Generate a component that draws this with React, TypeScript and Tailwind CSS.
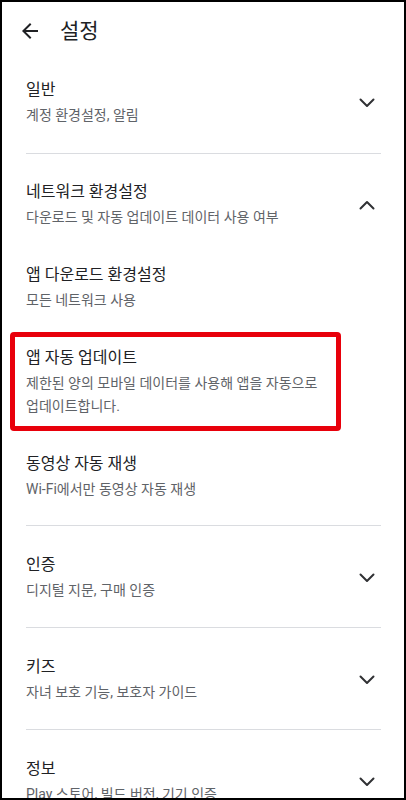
import React from "react";

const Chevron = ({ up = false }: { up?: boolean }) => (
  <svg width="16" height="10" viewBox="0 0 16 10" className="shrink-0" fill="none">
    <polyline
      points={up ? "1.5,8.5 8,2 14.5,8.5" : "1.5,1.5 8,8 14.5,1.5"}
      stroke="#303134"
      strokeWidth="2"
      strokeLinecap="round"
      strokeLinejoin="round"
    />
  </svg>
);

const Title = ({ children }: { children: React.ReactNode }) => (
  <div className="text-[16px] leading-[22px] text-[#202124]">{children}</div>
);
const Sub = ({ children }: { children: React.ReactNode }) => (
  <div className="mt-[3px] text-[14px] leading-[23px] text-[#5f6368]">{children}</div>
);

const Divider = () => <div className="ml-[24px] mr-[23px] h-px bg-[#dadce0]" />;

const Section = ({
  title,
  sub,
  first = false,
}: {
  title: string;
  sub: string;
  first?: boolean;
}) => (
  <div>
    <div
      className={`flex items-center justify-between pl-[24px] pr-[29px] ${first ? "pt-[19px] pb-[26px]" : "pt-[28px] pb-[25px]"}`}
    >
      <div>
        <Title>{title}</Title>
        <Sub>{sub}</Sub>
      </div>
      <Chevron />
    </div>
    <Divider />
  </div>
);

export default function App() {
  return (
    <div
      className="w-[406px] h-[800px] overflow-hidden border-2 border-black bg-white box-border"
      style={{ fontFamily: 'Roboto, "Noto Sans CJK KR", "Noto Sans", sans-serif' }}
    >
      <div className="flex h-[58px] items-center">
        <svg width="24" height="24" viewBox="0 0 24 24" className="ml-[16px] shrink-0">
          <path
            d="M20 11H7.83l5.59-5.59L12 4l-8 8 8 8 1.41-1.41L7.83 13H20v-2z"
            fill="#202124"
          />
        </svg>
        <div className="ml-[18px] text-[21px] leading-[28px] text-[#202124]">설정</div>
      </div>

      <Section first title="일반" sub="계정 환경설정, 알림" />

      <div>
        <div className="flex items-center justify-between pl-[24px] pr-[29px] pt-[27px] pb-[17px]">
          <div>
            <Title>네트워크 환경설정</Title>
            <Sub>다운로드 및 자동 업데이트 데이터 사용 여부</Sub>
          </div>
          <Chevron up />
        </div>
        <div className="pl-[24px] pr-[29px] pt-[18px] pb-[17px]">
          <Title>앱 다운로드 환경설정</Title>
          <Sub>모든 네트워크 사용</Sub>
        </div>
        <div className="relative pl-[24px] pr-[29px] pt-[18px] pb-[17px]">
          <Title>앱 자동 업데이트</Title>
          <Sub>
            제한된 양의 모바일 데이터를 사용해 앱을 자동으로
            <br />
            업데이트합니다.
          </Sub>
          <div className="absolute left-[8px] top-[3px] h-[99px] w-[331px] rounded-[4px] border-[5px] border-[#e8000b]" />
        </div>
        <div className="pl-[24px] pr-[29px] pt-[18px] pb-[24px]">
          <Title>동영상 자동 재생</Title>
          <Sub>Wi-Fi에서만 동영상 자동 재생</Sub>
        </div>
        <Divider />
      </div>

      <Section title="인증" sub="디지털 지문, 구매 인증" />
      <Section title="키즈" sub="자녀 보호 기능, 보호자 가이드" />
      <Section title="정보" sub="Play 스토어, 빌드 버전, 기기 인증" />
    </div>
  );
}
